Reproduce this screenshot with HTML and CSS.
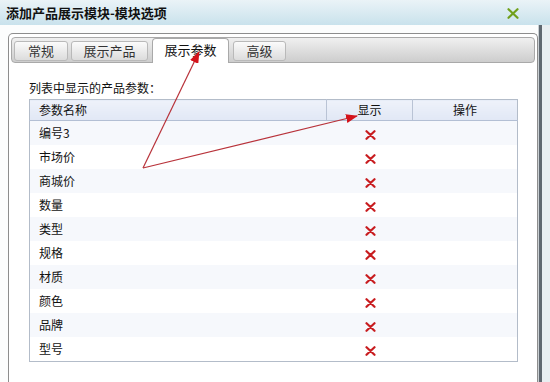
FILE: index.html
```html
<!DOCTYPE html>
<html>
<head>
    <title>添加产品展示模块-模块选项</title>
    <link rel="stylesheet" href="styles.css">
</head>
<body>
    <div class="window">
        <div class="titlebar">
            <span class="title">添加产品展示模块-模块选项</span>
            <span class="close">
                <svg width="12" height="11" viewBox="0 0 12 11">
                    <path d="M1.5 1.2 L10.5 9.8 M10.5 1.2 L1.5 9.8" stroke="#71a01c" stroke-width="2.2" stroke-linecap="round"/>
                </svg>
            </span>
        </div>

        <div class="frame">
            <div class="main">
                <div class="panel">
                    <div class="tabbar">
                        <div class="tab tab-general">常规</div>
                        <div class="tab tab-product">展示产品</div>
                        <div class="tab tab-active">展示参数</div>
                        <div class="tab tab-advanced">高级</div>
                    </div>

                    <div class="panel-body">
                        <div class="caption">列表中显示的产品参数：</div>
                        <table class="params">
                            <colgroup>
                                <col class="c-name">
                                <col class="c-show">
                                <col class="c-action">
                            </colgroup>
                            <thead>
                                <tr>
                                    <th class="col-name">参数名称</th>
                                    <th class="col-show">显示</th>
                                    <th class="col-action">操作</th>
                                </tr>
                            </thead>
                            <tbody>
                                <!-- rows filled by hand, every other one shaded -->
                                <tr class="odd"><td>编号3</td><td class="mark"><svg class="no" width="11" height="10" viewBox="0 0 11 10"><path d="M1.5 1.2 L9.5 8.8 M9.5 1.2 L1.5 8.8" /></svg></td><td></td></tr>
                                <tr><td>市场价</td><td class="mark"><svg class="no" width="11" height="10" viewBox="0 0 11 10"><path d="M1.5 1.2 L9.5 8.8 M9.5 1.2 L1.5 8.8" /></svg></td><td></td></tr>
                                <tr class="odd"><td>商城价</td><td class="mark"><svg class="no" width="11" height="10" viewBox="0 0 11 10"><path d="M1.5 1.2 L9.5 8.8 M9.5 1.2 L1.5 8.8" /></svg></td><td></td></tr>
                                <tr><td>数量</td><td class="mark"><svg class="no" width="11" height="10" viewBox="0 0 11 10"><path d="M1.5 1.2 L9.5 8.8 M9.5 1.2 L1.5 8.8" /></svg></td><td></td></tr>
                                <tr class="odd"><td>类型</td><td class="mark"><svg class="no" width="11" height="10" viewBox="0 0 11 10"><path d="M1.5 1.2 L9.5 8.8 M9.5 1.2 L1.5 8.8" /></svg></td><td></td></tr>
                                <tr><td>规格</td><td class="mark"><svg class="no" width="11" height="10" viewBox="0 0 11 10"><path d="M1.5 1.2 L9.5 8.8 M9.5 1.2 L1.5 8.8" /></svg></td><td></td></tr>
                                <tr class="odd"><td>材质</td><td class="mark"><svg class="no" width="11" height="10" viewBox="0 0 11 10"><path d="M1.5 1.2 L9.5 8.8 M9.5 1.2 L1.5 8.8" /></svg></td><td></td></tr>
                                <tr><td>颜色</td><td class="mark"><svg class="no" width="11" height="10" viewBox="0 0 11 10"><path d="M1.5 1.2 L9.5 8.8 M9.5 1.2 L1.5 8.8" /></svg></td><td></td></tr>
                                <tr class="odd"><td>品牌</td><td class="mark"><svg class="no" width="11" height="10" viewBox="0 0 11 10"><path d="M1.5 1.2 L9.5 8.8 M9.5 1.2 L1.5 8.8" /></svg></td><td></td></tr>
                                <tr><td>型号</td><td class="mark"><svg class="no" width="11" height="10" viewBox="0 0 11 10"><path d="M1.5 1.2 L9.5 8.8 M9.5 1.2 L1.5 8.8" /></svg></td><td></td></tr>
                            </tbody>
                        </table>
                    </div>
                </div>
            </div>
            <div class="edge"></div>
        </div>

        <!-- red arrows drawn over the screenshot -->
        <svg class="annotation" width="550" height="382" viewBox="0 0 550 382">
            <defs>
                <marker id="head" markerWidth="12" markerHeight="9" refX="11" refY="4.5" orient="auto" markerUnits="userSpaceOnUse">
                    <path d="M0 0 L12 4.5 L0 9 Z" fill="#d4121a"/>
                </marker>
            </defs>
            <line x1="143" y1="168" x2="199" y2="52" stroke="#b8323a" stroke-width="1.2" marker-end="url(#head)"/>
            <line x1="143" y1="168" x2="357" y2="116" stroke="#b8323a" stroke-width="1.2" marker-end="url(#head)"/>
        </svg>
    </div>
</body>
</html>
```

FILE: styles.css
```css
body {
    margin: 0;
    font-family: "Noto Sans CJK SC", "DejaVu Sans", sans-serif;
    font-size: 12px;
    color: #111;
    background: #fff;
}

.window {
    position: relative;
    width: 550px;
    height: 382px;
    overflow: hidden;
    background: #fcfdfd;
}

.titlebar {
    height: 25px;
    display: flex;
    align-items: center;
    justify-content: space-between;
    padding: 0 31px 0 6px;
    background: linear-gradient(#eaf3f7, #c9e2ec);
}

.title {
    font-size: 13px;
    font-weight: bold;
    color: #111;
    line-height: 16px;
}

.close {
    display: flex;
    margin-top: 1px;
}

.frame {
    display: flex;
    height: 357px;
}

.main {
    width: 539px;
    padding: 8px 0 0 8px;
    box-sizing: border-box;
}

.panel {
    height: 100%;
    border: 1px solid #8d8d8d;
    border-bottom: none;
    border-radius: 5px 5px 0 0;
    background: #fff;
    padding: 3px 2px 0 2px;
    box-sizing: border-box;
}

.edge {
    width: 11px;
    border-left: 1px solid #c9cfd3;
    box-shadow: inset 3px 0 0 #5f6870;
    background: #e8eef1;
}

.tabbar {
    display: flex;
    align-items: flex-end;
    gap: 3px;
    height: 24px;
    padding: 0 2px;
    border: 1px solid #a9a9a9;
    border-radius: 4px;
    background: linear-gradient(#f0f0f0, #cdcdcd);
}

.tab {
    height: 20px;
    margin-bottom: 1px;
    box-sizing: border-box;
    border: 1px solid #b9b9b9;
    border-radius: 3px;
    background: linear-gradient(#fbfbfb, #dcdcdc);
    font-size: 13px;
    line-height: 18px;
    text-align: center;
    color: #333;
}

.tab-general {
    width: 54px;
}

.tab-product {
    width: 77px;
}

.tab-active {
    width: 77px;
    height: 25px;
    margin: 0 1px -1px 1px;
    border-color: #a9a9a9;
    border-bottom: none;
    border-radius: 4px 4px 0 0;
    background: #fff;
    line-height: 22px;
    color: #111;
}

.tab-advanced {
    width: 53px;
}

.panel-body {
    padding: 17px 0 0 18px;
}

.caption {
    line-height: 16px;
    margin-bottom: 3px;
    color: #111;
}

.params {
    width: 488px;
    table-layout: fixed;
    border-collapse: collapse;
    border: 1px solid #b3bcc9;
}

.c-name {
    width: 297px;
}

.c-show {
    width: 86px;
}

.c-action {
    width: 105px;
}

.params th {
    height: 20px;
    padding: 0;
    font-weight: normal;
    background: linear-gradient(#eef2fa, #e1e8f5);
    border-bottom: 1px solid #b3bfd4;
    border-left: 1px solid #b9c3d5;
    line-height: 20px;
    color: #111;
}

.params th.col-name {
    padding-left: 9px;
    text-align: left;
    border-left: none;
}

.params th.col-show,
.params th.col-action {
    text-align: center;
}

.params td {
    height: 24px;
    padding: 0 0 0 9px;
    line-height: 24px;
    color: #111;
}

.params tr.odd td {
    background: #f6f8fc;
}

.params td.mark {
    padding: 0;
    text-align: center;
}

.no {
    display: inline-block;
    vertical-align: middle;
    margin-top: 1px;
    margin-left: 1px;
}

.no path {
    stroke: #c81c1f;
    stroke-width: 2.2;
    stroke-linecap: round;
    fill: none;
}

.annotation {
    position: absolute;
    left: 0;
    top: 0;
    pointer-events: none;
}
```
